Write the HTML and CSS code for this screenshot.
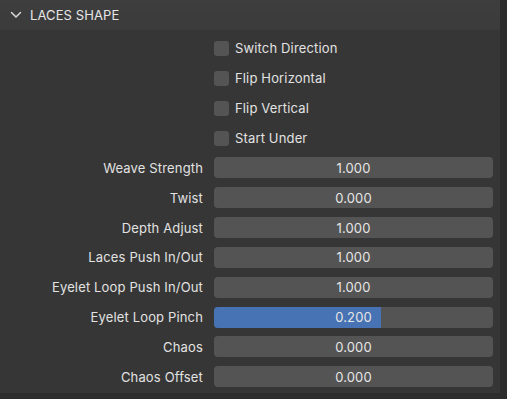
FILE: index.html
```html
<!DOCTYPE html>
<html>
<head>
<meta charset="utf-8">
<link rel="stylesheet" href="styles.css">
</head>
<body>
<div class="panel">
  <div class="header">
    <svg class="chev" width="12" height="8" viewBox="0 0 12 8"><path d="M1.5 1.5 L6 6 L10.5 1.5" fill="none" stroke="#d8d8d8" stroke-width="1.5" stroke-linecap="round" stroke-linejoin="round"/></svg>
    <span class="title">LACES SHAPE</span>
  </div>
  <div class="body">
    <div class="row check"><span class="label"></span><div class="ctl"><span class="box"></span><span class="ctext">Switch Direction</span></div></div>
    <div class="row check"><span class="label"></span><div class="ctl"><span class="box"></span><span class="ctext">Flip Horizontal</span></div></div>
    <div class="row check"><span class="label"></span><div class="ctl"><span class="box"></span><span class="ctext">Flip Vertical</span></div></div>
    <div class="row check"><span class="label"></span><div class="ctl"><span class="box"></span><span class="ctext">Start Under</span></div></div>
    <div class="row slide"><span class="label">Weave Strength</span><div class="slider"><span class="val">1.000</span></div></div>
    <div class="row slide"><span class="label">Twist</span><div class="slider"><span class="val">0.000</span></div></div>
    <div class="row slide"><span class="label">Depth Adjust</span><div class="slider"><span class="val">1.000</span></div></div>
    <div class="row slide"><span class="label">Laces Push In/Out</span><div class="slider"><span class="val">1.000</span></div></div>
    <div class="row slide"><span class="label">Eyelet Loop Push In/Out</span><div class="slider"><span class="val">1.000</span></div></div>
    <div class="row slide"><span class="label">Eyelet Loop Pinch</span><div class="slider"><span class="fill" style="width:167px"></span><span class="val">0.200</span></div></div>
    <div class="row slide"><span class="label">Chaos</span><div class="slider"><span class="val">0.000</span></div></div>
    <div class="row slide"><span class="label">Chaos Offset</span><div class="slider"><span class="val">0.000</span></div></div>
  </div>
</div>
</body>
</html>
```
FILE: styles.css
```css
html, body {
  margin: 0;
  padding: 0;
  background: #2d2d2d;
  width: 507px;
  height: 399px;
  overflow: hidden;
  font-family: Inter, "DejaVu Sans", sans-serif;
  font-size: 13px;
  letter-spacing: 0.15px;
  color: #e2e2e2;
}
.panel {
  width: 500px;
  background: #363636;
  padding-bottom: 1px;
}
.header {
  height: 30px;
  background: linear-gradient(#3e3e3e, #3b3b3b);
  display: flex;
  align-items: center;
}
.chev {
  margin-left: 10px;
  margin-right: 8px;
  margin-top: -1px;
}
.title {
  color: #e6e6e6;
  letter-spacing: 0.1px;
  margin-top: -1px;
}
.body {
  padding-top: 3px;
  display: flex;
  flex-direction: column;
}
.row {
  display: grid;
  grid-template-columns: 203px 279px;
  column-gap: 11px;
  align-items: center;
}
.row.check { height: 30px; }
.row.slide { height: 29.85px; }
.label {
  text-align: right;
  white-space: nowrap;
}
.ctl {
  display: flex;
  align-items: center;
}
.box {
  width: 15px;
  height: 15px;
  border-radius: 3px;
  background: #545454;
  margin-right: 6px;
}
.slider {
  position: relative;
  height: 21px;
  border-radius: 4px;
  background: #545454;
  overflow: hidden;
  display: flex;
  align-items: center;
  justify-content: center;
}
.fill {
  position: absolute;
  left: 0;
  top: 0;
  bottom: 0;
  background: #4772b3;
}
.val {
  position: relative;
  color: #e6e6e6;
}
```
